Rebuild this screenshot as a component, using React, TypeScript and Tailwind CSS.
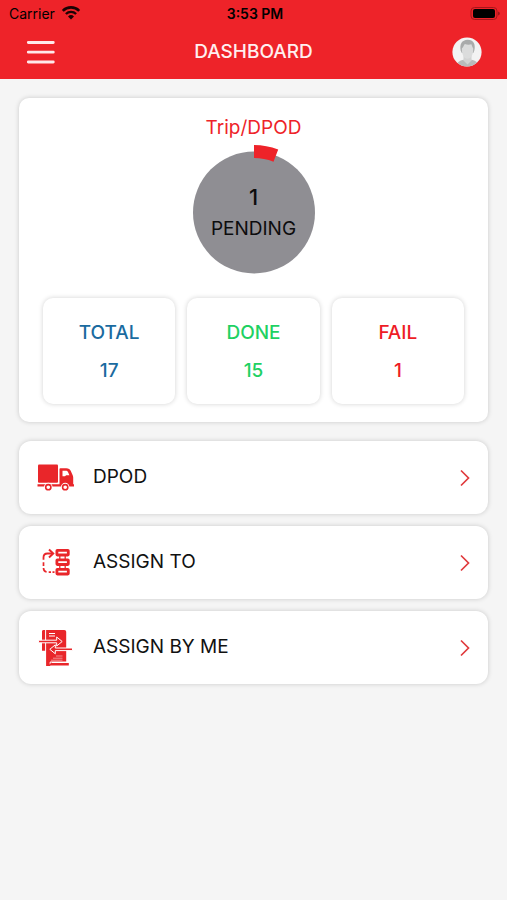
import { ReactNode } from "react";

const StatusBar = () => {
  return (
    <div className="grid grid-cols-3 items-center h-7 pl-[9px] pr-1.5 text-black">
      <div className="flex items-center gap-1.5 text-sm">
        Carrier
        <svg className="w-5 h-4" viewBox="0 0 20 16" fill="none" stroke="#1c0304">
          <path d="M1.8 4.8a11.6 11.6 0 0 1 16.4 0" strokeWidth="2.6" />
          <path d="M4.9 8a7.2 7.2 0 0 1 10.2 0" strokeWidth="2.4" />
          <path
            d="M10 13.6 7 10.5a4.3 4.3 0 0 1 6 0Z"
            fill="#1c0304"
            stroke="none"
          />
        </svg>
      </div>
      <div className="text-center text-sm font-semibold">3:53 PM</div>
      <svg className="w-8 h-4 justify-self-end" viewBox="0 0 32 16">
        <rect
          x="2"
          y="1.5"
          width="26"
          height="12"
          rx="3.5"
          fill="none"
          stroke="#a5161b"
        />
        <rect x="4" y="3" width="22" height="9" rx="2" fill="#000" />
        <path d="M29.3 5.5v4c1.8-.8 1.8-3.2 0-4Z" fill="#7d1115" />
      </svg>
    </div>
  );
};

const Header = () => {
  return (
    <header className="bg-[#ee2329] h-[79px]">
      <StatusBar />
      <div className="flex items-center justify-between h-12 pl-6 pr-6">
        <button type="button" aria-label="Menu">
          <svg
            className="w-8 h-8"
            viewBox="0 0 32 32"
            stroke="#ffe9ea"
            strokeWidth="2.8"
            strokeLinecap="round"
          >
            <path d="M4.3 6.5h25M4.3 16.2h25M4.3 26h25" />
          </svg>
        </button>
        <h1 className="text-[19px] font-medium text-[#ffeff0]">DASHBOARD</h1>
        <button type="button" aria-label="Profile">
          <svg className="w-8 h-8" viewBox="0 0 32 32">
            <defs>
              <clipPath id="avatar">
                <circle cx="16" cy="16" r="14.6" />
              </clipPath>
            </defs>
            <g clipPath="url(#avatar)">
              <rect width="32" height="32" fill="#f3f3f3" />
              <path
                d="M5 32c0-5 2.5-6.8 7.3-8.2h8.4c4.8 1.4 7.3 3.2 7.3 8.2Z"
                fill="#b9bbbb"
              />
              <path d="M12.5 20h8v4.5l-4 4-4-4Z" fill="#d2d3d3" />
              <path
                d="M9.7 14.5c-1.4-6.5 1.2-10.5 6.8-10.8 5.8-.2 8.3 4.3 6.8 10.8l-1 2.5H10.8Z"
                fill="#a9abab"
              />
              <path
                d="M10.8 12.5c1.5-1 2-3.2 3-4.5 2 1 5 1 6.6.3.6 1.7 1 3.2 1.9 4.2 0 6.5-2.3 10.3-5.8 10.3s-5.7-3.8-5.7-10.3Z"
                fill="#dbdcdc"
              />
            </g>
          </svg>
        </button>
      </div>
    </header>
  );
};

const PendingChart = ({ pending, total }: { pending: number; total: number }) => {
  const angle = (pending / total) * Math.PI * 2;
  const point = (r: number) =>
    `${68 + r * Math.sin(angle)} ${68 - r * Math.cos(angle)}`;

  return (
    <div className="relative w-[136px] h-[136px] mx-auto mt-0.5">
      <svg className="w-full h-full" viewBox="0 0 136 136">
        <circle cx="68" cy="68.5" r="61" fill="#8f8e93" />
        <path
          d={`M68 1A67 67 0 0 1 ${point(67)}L${point(54)}A54 54 0 0 0 68 14Z`}
          fill="#ee2329"
        />
      </svg>
      <div className="absolute inset-0 flex flex-col items-center justify-center pt-0.5 text-[#0c0c0d]">
        <span className="text-[22px] leading-8 font-medium">{pending}</span>
        <span className="text-[19px] leading-8">PENDING</span>
      </div>
    </div>
  );
};

const StatTile = ({
  label,
  value,
  className,
}: {
  label: string;
  value: number;
  className: string;
}) => {
  return (
    <div
      className={`flex flex-col items-center gap-2.5 pt-[21px] pb-[19px] rounded-[10px] bg-white shadow-[0_0_5px_rgba(0,0,0,0.18)] text-[19px] leading-7 font-medium ${className}`}
    >
      <span>{label}</span>
      <span>{value}</span>
    </div>
  );
};

const TruckIcon = () => (
  <svg className="w-10 h-10" viewBox="0 0 40 40" fill="#e9262a">
    <rect x="3" y="6.5" width="20" height="18.2" rx="1" />
    <path d="M2.5 26.2h22V11c0-.5.3-.8.8-.8h6c2.3 0 3.6.9 4.5 2.8l1.9 4.2c.3.8.5 1.5.5 2.3v6.7H39v2.2H2.5Z" />
    <path
      d="M27.5 12.8h3c1.4 0 2 .4 2.6 1.5l1.3 2.9h-3.2l-1.2 1h-2.5Z"
      fill="#fff"
    />
    <circle cx="13.3" cy="29" r="4.2" fill="#fff" />
    <circle cx="30.2" cy="29" r="4.2" fill="#fff" />
    <circle cx="13.3" cy="29.2" r="2.6" fill="#fff" stroke="#e9262a" strokeWidth="1.6" />
    <circle cx="30.2" cy="29.2" r="2.6" fill="#fff" stroke="#e9262a" strokeWidth="1.6" />
  </svg>
);

const AssignToIcon = () => (
  <svg className="w-10 h-10" viewBox="0 0 40 40" fill="none" stroke="#e9262a">
    <path d="M24.8 12v14M30.2 12v14" strokeWidth="1.3" />
    <g fill="#fff" strokeWidth="2.8">
      <rect x="21.9" y="7.4" width="11.4" height="4.6" rx=".4" />
      <rect x="21.9" y="16.9" width="11.4" height="4.6" rx=".4" />
      <rect x="21.9" y="26.4" width="11.4" height="4.6" rx=".4" />
    </g>
    <path d="M8.5 16.8v-2.3c0-2.6 1.400-4 4-4h5.200" strokeWidth="1.8" />
    <path d="m14 6.6 4.200 3.900-4.200 3.900" strokeWidth="2" />
    <path
      d="M8.5 19.3v3.700M8.500 25c0 2.400 1 3.600 3.100 4M13.700 29.200h2.300M17.500 29.200h2"
      strokeWidth="1.7"
    />
  </svg>
);

const AssignByMeIcon = () => (
  <svg className="w-10 h-10" viewBox="0 0 40 40" fill="#e9262a">
    <path d="M7 3.5C7 2.500 7.600 2 8.600 2h1.500v20.800H7Z" />
    <path d="M11.100 2h18.100c1.300 0 2 .7 2 2v30H17l-2 4h-3.900Z" />
    <path d="M14 5.500h6M14 8h6" stroke="#fff" strokeWidth="1.100" />
    {/* arrows, each with a white edge around it */}
    <g fill="#e9262a" stroke="#fff" strokeWidth="1" strokeLinejoin="round">
      <path d="M3.500 12.200h18.200V9l5.500 4.500-5.500 4.500v-3.200H3.500Z" />
      <path d="M37.500 22.600H20.300v3.200l-5.500-4.500 5.500-4.500V20h17.200Z" />
    </g>
    <path
      d="M21 28h6.500M18 30.200h9.500M16 32.200h11.500"
      stroke="#fff"
      strokeWidth=".7"
      opacity=".7"
    />
    <path d="M15.200 36.500V34h18" stroke="#fff" strokeWidth="1" fill="none" />
    <path d="M16 35.100h17.800v2.500H14Z" />
  </svg>
);

const MenuRow = ({ icon, label }: { icon: ReactNode; label: string }) => {
  return (
    <button
      type="button"
      className="flex items-center w-full h-[73px] px-4 rounded-xl bg-white shadow-[0_0_5px_rgba(0,0,0,0.18)] text-left"
    >
      {icon}
      <span className="grow pl-[18px] text-[19px] text-[#111]">{label}</span>
      <svg
        className="w-4 h-5"
        viewBox="0 0 16 20"
        fill="none"
        stroke="#e03a3d"
        strokeWidth="1.7"
      >
        <path d="m5 2.5 7.5 7.500-7.500 7.500" />
      </svg>
    </button>
  );
};

const App = () => {
  return (
    <div className="min-h-screen bg-[#f5f5f5] font-[Inter,sans-serif]">
      <Header />
      <main className="px-[19px] pt-[19px]">
        <section className="px-6 pt-4 pb-[18px] rounded-[10px] bg-white shadow-[0_0_5px_rgba(0,0,0,0.18)]">
          <h2 className="text-center text-[19px] leading-7 text-[#ee2329]">
            Trip/DPOD
          </h2>
          <PendingChart pending={1} total={17} />
          <div className="grid grid-cols-3 gap-3 mt-[18px]">
            <StatTile label="TOTAL" value={17} className="text-[#1a6ba0]" />
            <StatTile label="DONE" value={15} className="text-[#1fd163]" />
            <StatTile label="FAIL" value={1} className="text-[#ee1c25]" />
          </div>
        </section>
        <nav className="flex flex-col gap-3 mt-[19px]">
          <MenuRow icon={<TruckIcon />} label="DPOD" />
          <MenuRow icon={<AssignToIcon />} label="ASSIGN TO" />
          <MenuRow icon={<AssignByMeIcon />} label="ASSIGN BY ME" />
        </nav>
      </main>
    </div>
  );
};

export default App;
